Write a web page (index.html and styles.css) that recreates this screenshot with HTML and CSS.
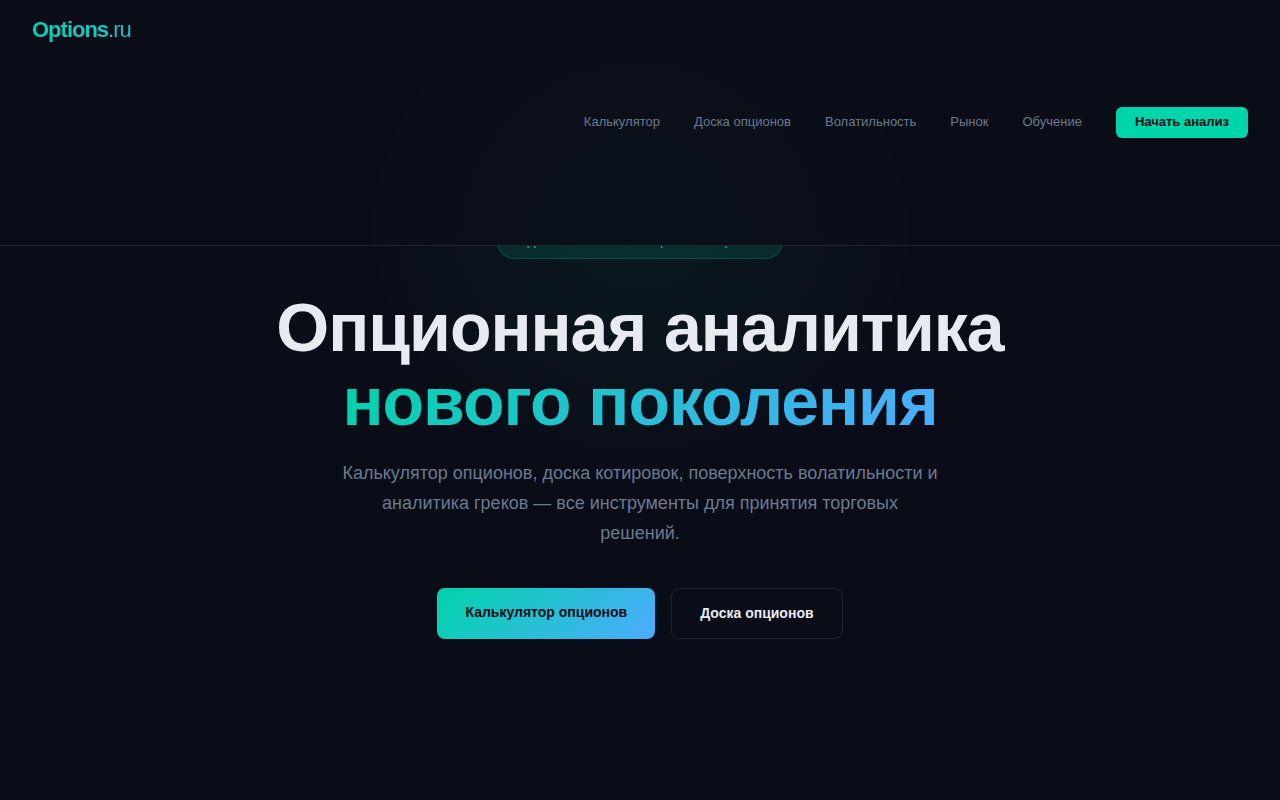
FILE: index.html
```html
<!DOCTYPE html>
<html lang="ru">

<head>
    <meta charset="UTF-8">
    <meta name="viewport" content="width=device-width, initial-scale=1.0">
    <title>Options.ru</title>
    <link rel="stylesheet" href="styles.css">
</head>

<body>

    <header class="header">
        <a class="logo" href="#">Options<span>.ru</span></a>
        <nav class="nav">
            <a href="#calc">Калькулятор</a>
            <a href="#board">Доска опционов</a>
            <a href="#vol">Волатильность</a>
            <a href="#market">Рынок</a>
            <a href="#learn">Обучение</a>
            <a class="nav-cta" href="#start">Начать анализ</a>
        </nav>
    </header>

    <main class="hero">
        <div class="badge"><span class="dot"></span>Данные обновляются в реальном времени</div>
        <h1>Опционная аналитика<br><span class="gradient">нового поколения</span></h1>
        <p class="lead">Калькулятор опционов, доска котировок, поверхность волатильности и аналитика греков — все инструменты для принятия торговых решений.</p>
        <div class="actions">
            <a class="btn btn-primary" href="#calc">Калькулятор опционов</a>
            <a class="btn btn-outline" href="#board">Доска опционов</a>
        </div>
    </main>

</body>

</html>
```
FILE: styles.css
```css
* {
    margin: 0;
    padding: 0;
    box-sizing: border-box;
}

body {
    font-family: "Liberation Sans", Arial, sans-serif;
    background: #0a0d17;
    color: #e8eaf2;
    line-height: 1.6;
}

a {
    text-decoration: none;
}

.header {
    position: fixed;
    top: 0;
    left: 0;
    right: 0;
    z-index: 10;
    display: flex;
    justify-content: space-between;
    padding: 0 32px;
    background: radial-gradient(circle at 50% 100%, rgba(0, 212, 170, 0.02), transparent 300px) #0a0d17;
    border-bottom: 1px solid #1e2430;
}

.logo {
    padding-top: 12px;
    font-size: 22px;
    font-weight: 700;
    letter-spacing: -1px;
    background: linear-gradient(135deg, #00d4aa, #4dabff);
    -webkit-background-clip: text;
    background-clip: text;
    color: transparent;
}

.logo span {
    font-weight: 400;
}

.nav {
    display: flex;
    align-items: center;
    gap: 34px;
    padding: 107px 0;
    font-size: 13px;
}

.nav a {
    color: #6b7a90;
}

.nav .nav-cta {
    padding: 5px 19px;
    border-radius: 6px;
    background: #00d4aa;
    color: #0a0d17;
    font-weight: 700;
}

.hero {
    min-height: 100vh;
    display: flex;
    flex-direction: column;
    align-items: center;
    padding: 224px 24px 80px;
    text-align: center;
    background: radial-gradient(circle at 50% 200px, rgba(0, 212, 170, 0.07), transparent 280px);
}

.badge {
    display: flex;
    align-items: center;
    gap: 8px;
    padding: 7px 16px;
    border: 1px solid rgba(0, 212, 170, 0.2);
    border-radius: 20px;
    background: rgba(0, 212, 170, 0.12);
    color: #00d4aa;
    font-size: 12px;
}

.dot {
    width: 6px;
    height: 6px;
    border-radius: 50%;
    background: #00d4aa;
}

h1 {
    margin-top: 31px;
    font-size: 68px;
    line-height: 74px;
    letter-spacing: -1px;
}

.gradient {
    background: linear-gradient(135deg, #00d4aa, #4dabff);
    -webkit-background-clip: text;
    background-clip: text;
    color: transparent;
}

.lead {
    max-width: 600px;
    margin-top: 20px;
    color: #6b7a90;
    font-size: 18px;
    line-height: 30px;
}

.actions {
    display: flex;
    gap: 16px;
    margin-top: 40px;
}

.btn {
    padding: 14px 28px;
    border-radius: 8px;
    font-size: 14px;
    line-height: 21px;
    font-weight: 700;
}

.btn-primary {
    background: linear-gradient(135deg, #00d4aa, #4dabff);
    color: #0a0d17;
}

.btn-outline {
    border: 1px solid #1e2430;
    color: #e8eaf2;
}
```
